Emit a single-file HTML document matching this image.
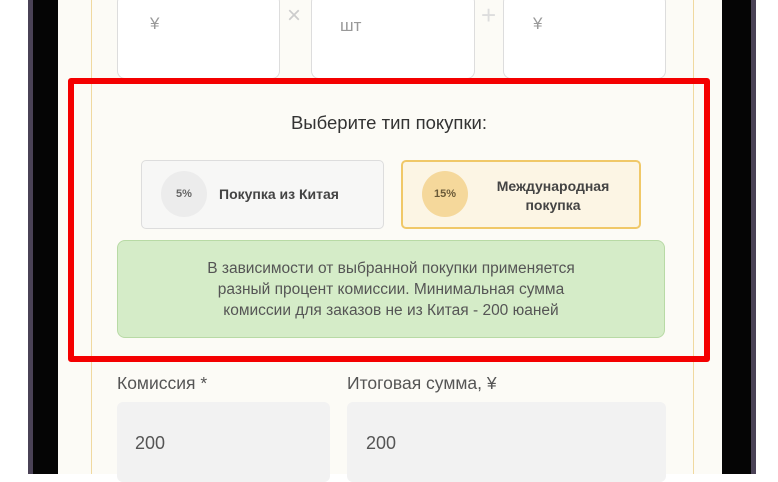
<!DOCTYPE html>
<html><head><meta charset="utf-8"><style>
*{margin:0;padding:0;box-sizing:border-box}
body{width:778px;height:474px;overflow:hidden;background:#fff;position:relative;font-family:"Liberation Sans",sans-serif;color:#444}
.a{position:absolute}
</style></head><body>
<div class="a" style="left:28px;top:0;width:728px;height:474px;background:#4a4256;"></div>
<div class="a" style="left:33px;top:0;width:718px;height:474px;background:#050505;"></div>
<div class="a" style="left:58px;top:0;width:664px;height:474px;background:#fcfbf6;"></div>
<div class="a" style="left:91px;top:0;width:603px;height:474px;border-left:1.5px solid #f0d9a0;border-right:1.5px solid #f0d9a0;"></div>

<div class="a" style="left:117px;top:-6px;width:163px;height:85px;background:#fff;border:1.5px solid #ddd;border-radius:8px"></div>
<div class="a" style="left:150px;top:14px;font-size:17px;color:#999">¥</div>
<div class="a" style="left:287px;top:2px;font-size:24px;color:#ccc">×</div>
<div class="a" style="left:311px;top:-6px;width:164px;height:85px;background:#fff;border:1.5px solid #ddd;border-radius:8px"></div>
<div class="a" style="left:340px;top:16px;font-size:17px;color:#999">шт</div>
<div class="a" style="left:481px;top:0px;font-size:26px;color:#ddd">+</div>
<div class="a" style="left:503px;top:-6px;width:163px;height:85px;background:#fff;border:1.5px solid #ddd;border-radius:8px"></div>
<div class="a" style="left:533px;top:14px;font-size:17px;color:#999">¥</div>

<div class="a" style="left:68px;top:78px;width:642px;height:284px;border:6px solid #f40000;border-radius:3px"></div>
<div class="a" style="left:68px;top:112px;width:642px;text-align:center;font-size:18.5px;color:#333">Выберите тип покупки:</div>

<div class="a" style="left:141px;top:160px;width:243px;height:69px;background:#f7f7f6;border:1.5px solid #ddd;border-radius:5px"></div>
<div class="a" style="left:161px;top:171px;width:46px;height:46px;border-radius:50%;background:#ececec;font-size:11px;font-weight:bold;color:#666;text-align:center;line-height:46px">5%</div>
<div class="a" style="left:219px;top:186px;font-size:14px;font-weight:bold;color:#444">Покупка из Китая</div>

<div class="a" style="left:401px;top:160px;width:240px;height:69px;background:#fcf5e4;border:2px solid #f0c868;border-radius:5px"></div>
<div class="a" style="left:422px;top:171px;width:46px;height:46px;border-radius:50%;background:#f5d89b;font-size:11px;font-weight:bold;color:#6a5a38;text-align:center;line-height:46px">15%</div>
<div class="a" style="left:478px;top:177px;width:150px;text-align:center;font-size:14px;font-weight:bold;color:#444;line-height:19px">Международная<br>покупка</div>

<div class="a" style="left:117px;top:240px;width:548px;height:98px;background:#d5ecc8;border:1.5px solid #b8daa5;border-radius:8px;text-align:center;font-size:15.5px;color:#555;line-height:21px;padding-top:17px">В зависимости от выбранной покупки применяется<br>разный процент комиссии. Минимальная сумма<br>комиссии для заказов не из Китая - 200 юаней</div>

<div class="a" style="left:117px;top:373px;font-size:17.5px;color:#555">Комиссия *</div>
<div class="a" style="left:347px;top:373px;font-size:17.5px;color:#555">Итоговая сумма, ¥</div>
<div class="a" style="left:117px;top:402px;width:213px;height:80px;background:#f2f2f2;border-radius:6px"></div>
<div class="a" style="left:347px;top:402px;width:319px;height:80px;background:#f2f2f2;border-radius:6px"></div>
<div class="a" style="left:135px;top:433px;font-size:18px;color:#555">200</div>
<div class="a" style="left:366px;top:433px;font-size:18px;color:#555">200</div>
</body></html>
